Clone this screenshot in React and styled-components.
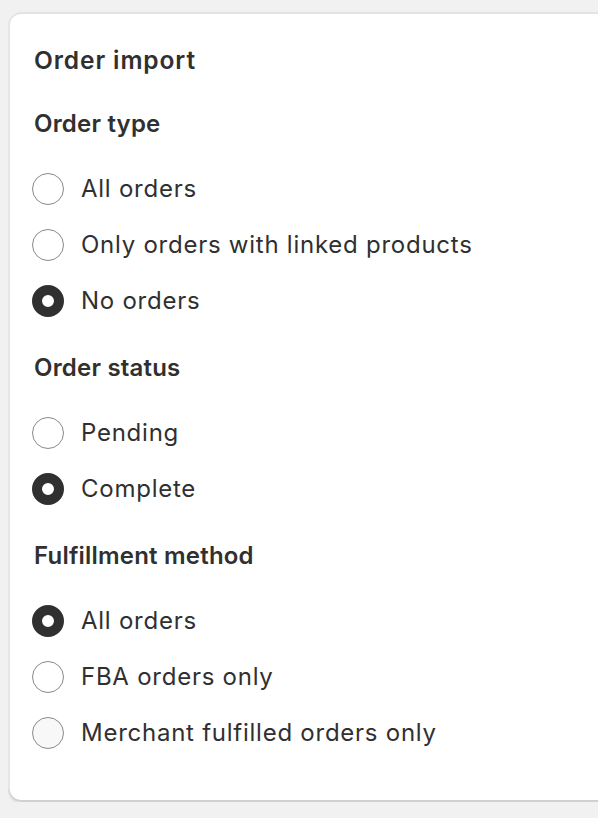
import React from "react";
import styled, { createGlobalStyle } from "styled-components";

const Global = createGlobalStyle`
  html, body { margin: 0; padding: 0; background: #f1f1f1; }
  body { font-family: Inter, "Noto Sans", "Liberation Sans", sans-serif; color: #303030; overflow: hidden; }
  * { box-sizing: border-box; }
`;

const Page = styled.div`
  padding: 12px 0 0 8px;
  width: 100%;
`;

const Card = styled.section`
  width: calc(100% + 24px);
  background: #ffffff;
  border-radius: 14px;
  padding: 28px 24px 49px 24px;
  box-shadow: 0 2px 0 rgba(26, 26, 26, 0.08), inset 0 2px 0 #e3e3e3,
    inset 0 -2px 0 #d0d0d0, inset 2px 0 0 #e6e6e6;
  display: flex;
  flex-direction: column;
  gap: 24px;
`;

const Title = styled.h2`
  margin: 0;
  font-size: 24.5px;
  line-height: 40px;
  font-weight: 600;
  letter-spacing: 0.9px;
  padding-left: 2px;
`;

const Sections = styled.div`
  display: flex;
  flex-direction: column;
  gap: 27px;
`;

const Section = styled.div`
  display: flex;
  flex-direction: column;
  gap: 25px;
`;

const SectionTitle = styled.h3`
  margin: 0;
  padding-left: 2px;
  font-size: 24px;
  line-height: 40px;
  font-weight: 600;
  letter-spacing: 0.2px;
`;

const Options = styled.div`
  display: flex;
  flex-direction: column;
  gap: 16px;
`;

const Option = styled.label`
  display: flex;
  align-items: center;
  gap: 17px;
  height: 40px;
  font-size: 24px;
  line-height: 40px;
  letter-spacing: 0.75px;
  cursor: pointer;
`;

const Radio = styled.span`
  flex: none;
  width: 32px;
  height: 32px;
  border-radius: 50%;
  background: ${(p) => (p.$hover ? "#f8f8f8" : "#ffffff")};
  border: ${(p) => (p.$checked ? "10px solid #303030" : "1.5px solid #8a8a8a")};
`;

const sections = [
  {
    title: "Order type",
    options: [
      { label: "All orders" },
      { label: "Only orders with linked products" },
      { label: "No orders", checked: true },
    ],
  },
  {
    title: "Order status",
    options: [{ label: "Pending" }, { label: "Complete", checked: true }],
  },
  {
    title: "Fulfillment method",
    options: [
      { label: "All orders", checked: true },
      { label: "FBA orders only" },
      { label: "Merchant fulfilled orders only", hover: true },
    ],
  },
];

export default function App() {
  return (
    <Page>
      <Global />
      <Card>
        <Title>Order import</Title>
        <Sections>
          {sections.map((s) => (
            <Section key={s.title}>
              <SectionTitle>{s.title}</SectionTitle>
              <Options>
                {s.options.map((o) => (
                  <Option key={o.label}>
                    <Radio $checked={o.checked} $hover={o.hover} />
                    {o.label}
                  </Option>
                ))}
              </Options>
            </Section>
          ))}
        </Sections>
      </Card>
    </Page>
  );
}
